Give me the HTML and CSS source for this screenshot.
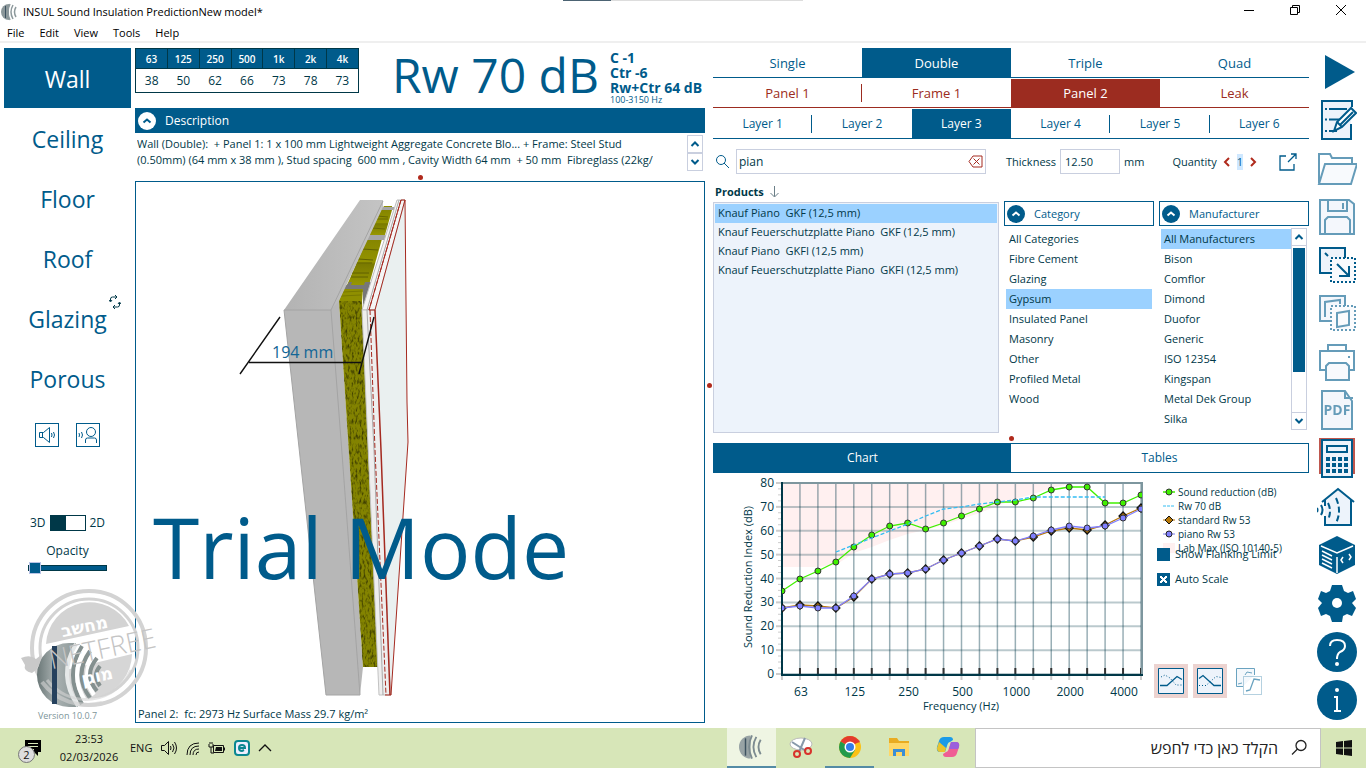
FILE: index.html
```html
<!DOCTYPE html>
<html lang="en">
<head>
<meta charset="utf-8">
<title>INSUL Sound Insulation Prediction</title>
<link rel="stylesheet" href="styles.css">
</head>
<body>
<header class="titlebar">
  <svg class="app-icon" width="18" height="18" viewBox="0 0 18 18"><path d="M8 1a8 8 0 0 0 0 16z" fill="#8b979a"/><path d="M4.500 3v12" stroke="#3d5260" stroke-width="1"/><path d="M9 1q-4 8 0 16M12 2q-4 7 0 14M15 4q-3 5 0 10" fill="none" stroke="#8d999c" stroke-width="1.500"/></svg>
  <h1>INSUL Sound Insulation PredictionNew model*</h1>
  <div class="window-buttons">
    <button aria-label="Minimize"><svg width="12" height="12"><path d="M1 6.500h10" stroke="#000"/></svg></button>
    <button aria-label="Restore"><svg width="12" height="12" fill="none" stroke="#000"><path d="M1.500 3.500h7v7h-7zM3.500 3.500v-2h7v7h-2"/></svg></button>
    <button aria-label="Close"><svg width="12" height="12"><path d="M1 1l10 10M11 1L1 11" stroke="#000"/></svg></button>
  </div>
  <div class="edge-strip"></div>
</header>
<nav class="menubar">
  <button>File</button><button>Edit</button><button>View</button><button>Tools</button><button>Help</button>
</nav>

<main class="workspace">
  <aside class="sidebar">
    <nav class="kinds">
      <button class="active">Wall</button>
      <button>Ceiling</button>
      <button>Floor</button>
      <button>Roof</button>
      <button class="has-mark">Glazing<svg class="mark" width="12" height="14" viewBox="0 0 12 14" fill="none" stroke="#003848"><path d="M1.500 6V4q0-2 2-2H8M6 0l2 2-2 2M10.500 8v2q0 2-2 2H4M6 14l-2-2 2-2M0 5l1.500 2L3 5M9 9l1.500-2L12 9"/></svg></button>
      <button>Porous</button>
    </nav>
    <div class="sound-buttons">
      <button aria-label="Play source"><svg width="22" height="22" viewBox="0 0 22 22" fill="none" stroke="#005b8b"><path d="M3.500 8.500h4l6-5v15l-6-5h-4zM6.500 8.500v5M15.500 9q1 2 0 4M17.500 8q2 3 0 6"/></svg></button>
      <button aria-label="Play receiver"><svg width="22" height="22" viewBox="0 0 22 22" fill="none" stroke="#005b8b"><circle cx="14" cy="8" r="4.500"/><path d="M8.500 19v-3q0-2 2-2h7q2 0 2 2v3M2 9q1 2 0 4M4.500 8q2 3 0 6"/></svg></button>
    </div>
    <div class="view-toggle"><span>3D</span><button role="switch" aria-checked="false" aria-label="3D or 2D view"><i></i></button><span>2D</span></div>
    <label class="opacity">Opacity<input type="range" min="0" max="100" value="0"></label>
    <svg class="brand" width="140" height="124" viewBox="20 586 140 124">
      <defs>
        <linearGradient id="ball" x1="0" x2="1"><stop offset="0" stop-color="#6a7777"/><stop offset=".45" stop-color="#aab2b2"/><stop offset="1" stop-color="#8a9696"/></linearGradient>
      </defs>
      <circle cx="89" cy="648" r="57" fill="none" stroke="#d3d3d3" stroke-width="4"/>
      <circle cx="89" cy="648" r="49" fill="none" stroke="#d3d3d3" stroke-width="3"/>
      <path d="M46 644a44 44 0 0 1 83-18z" fill="#d3d3d3"/>
      <path d="M49 674l83-20a44 44 0 0 1-83 20z" fill="#d6d6d6"/>
      <path d="M76 643h-7a32 32 0 0 0 0 64h9q-22-32-2-64z" fill="url(#ball)"/>
      <g fill="none" stroke-width="4"><path d="M76 644q-19 31 2 62" stroke="#e6e9e9"/><path d="M82 646q-18 29 0 58" stroke="#84908f"/><path d="M86 648q-18 27 0 54" stroke="#fff"/><path d="M90 651q-17 24 0 47" stroke="#84908f"/><path d="M94 654q-14 21 0 41" stroke="#fff"/><path d="M97 658q-14 17 0 33" stroke="#84908f"/><path d="M100 666q-8 9 0 20" stroke="#84908f"/></g>
      <path d="M47 680a49 49 0 0 0 84-10" fill="none" stroke="#d3d3d3" stroke-width="3" opacity=".6"/>
      <path d="M42 682a57 57 0 0 0 60 21" fill="none" stroke="#d3d3d3" stroke-width="4" opacity=".6"/>
      <rect x="52" y="646" width="5" height="58" fill="#26415d"/>
      <g transform="rotate(-12 89 648)">
        <text class="stamp-word" x="89" y="632" text-anchor="middle">מחשב</text>
        <text class="stamp-word" x="91" y="683" text-anchor="middle">מוגן</text>
        <text class="stamp-name" x="48" y="661">NETFREE</text>
      </g>
      <path d="M21 658q9-4 15 1l5-4q0 13-9 18-9-2-7-8z" fill="#c9c9c9"/>
    </svg>
    <p class="version">Version 10.0.7</p>
  </aside>

  <section class="model">
    <div class="summary">
      <table class="bands">
        <thead><tr><th>63</th><th>125</th><th>250</th><th>500</th><th>1k</th><th>2k</th><th>4k</th></tr></thead>
        <tbody><tr><td>38</td><td>50</td><td>62</td><td>66</td><td>73</td><td>78</td><td>73</td></tr></tbody>
      </table>
      <div class="rating">Rw 70 dB</div>
      <div class="terms"><b>C -1</b><b>Ctr -6</b><b>Rw+Ctr 64 dB</b><small>100-3150 Hz</small></div>
    </div>
    <div class="desc-head"><button class="chev light" aria-label="Collapse description"><svg width="18" height="18" viewBox="0 0 18 18"><path d="M5.500 10.500L9 7.500l3.500 3"/></svg></button><h2>Description</h2></div>
    <div class="desc-body">
      <p>Wall (Double):&nbsp; + Panel 1: 1 x 100 mm Lightweight Aggregate Concrete Blo... + Frame: Steel Stud<br>(0.50mm) (64 mm x 38 mm ), Stud spacing&nbsp; 600 mm , Cavity Width 64 mm&nbsp; + 50 mm&nbsp; Fibreglass (22kg/</p>
      <div class="stepper"><button aria-label="Scroll up"><svg width="10" height="8"><path d="M1.500 6L5 2.500 8.500 6"/></svg></button><button aria-label="Scroll down"><svg width="10" height="8"><path d="M1.500 2L5 5.500 8.500 2"/></svg></button></div>
    </div>
    <div class="split-dot"></div>
    <div class="canvas">
      <svg class="scene" viewBox="136 182 568 524" preserveAspectRatio="xMidYMid meet">
        <defs>
          <filter id="wool" x="0" y="0" width="100%" height="100%" color-interpolation-filters="sRGB"><feTurbulence type="fractalNoise" baseFrequency=".5 .2" numOctaves="2" seed="4"/><feColorMatrix values="0 0 0 0 .25  0 0 0 0 .25  0 0 0 0 0  3 0 0 0 -1.400"/><feComposite in2="SourceGraphic" operator="in" result="n"/><feMerge><feMergeNode in="SourceGraphic"/><feMergeNode in="n"/></feMerge></filter>
          <linearGradient id="gtop" x1="0" x2="1"><stop offset="0" stop-color="#b3b3b3"/><stop offset="1" stop-color="#c4c4c4"/></linearGradient>
          <linearGradient id="wtop" x1="0" y1="0" x2="0" y2="1"><stop offset="0" stop-color="#858500"/><stop offset=".5" stop-color="#939300"/><stop offset=".55" stop-color="#7a7a00"/><stop offset="1" stop-color="#979700"/></linearGradient>
        </defs>
        <path d="M384 206h8v3h-10z" fill="#8d8d00"/>
        <path d="M380 210h12l-7 25h-16z" fill="url(#wtop)"/>
        <path d="M376 219h12M377 216l11 1M372 228l13 1" stroke="#686800"/>
        <path d="M367 239h15l-13 46h-22z" fill="url(#wtop)"/>
        <path d="M362 249l16 1M356 263h16M352 273h17M358 259l15 1M351 277h17" stroke="#616100"/>
        <path d="M380 207h14v3h-14zM366 235h22l-3 5h-20z" fill="#a5a5a5"/>
        <path d="M343 285h4l2-3h3l-1 3h13l1-3h6l-8 25v-18h-22z" fill="#777"/>
        <path d="M344 289h19l-1 13h-24z" fill="#8f8f00"/>
        <path d="M343 292l20-1M341 296l20-1" stroke="#797900"/>
        <path d="M360 200h23v7l-44 94v9h-55z" fill="url(#gtop)"/>
        <path d="M284 310h47l8-9 24 366-3 28h-34z" fill="#b7b7b7"/>
        <path d="M284 310h47l10 130 19 255M331 310l52-109M284 310l42 385h34" fill="none" stroke="#a4a4a4"/>
        <path d="M339 301h23l16 366h-15z" fill="#838300" filter="url(#wool)"/>
        <path d="M397 200h8l-30 110h-13z" fill="#f5f5f5" stroke="#bdbdbd"/>
        <path d="M362 310h13l6 140 10 245h-12z" fill="#eee" stroke="#c2c2c2"/>
        <path d="M367 310l7 140 9 245M399 200l-32 110" fill="none" stroke="#aaa"/>
        <path d="M405 200l-30 110 6 140 10 245 17-253-1-40z" fill="#eaf0f0"/>
        <g fill="none" stroke="#a52a20"><path d="M401 200h4l-30 110h-6zM405 200l2 202 1 40-17 253h-6"/><path d="M375 310l6 140 9 245" stroke-width="1.500"/><path d="M370 310l5 140 11 245M401 200l-32 110" stroke-dasharray="5 2"/></g>
        <path d="M280 317l-40 57M374 317l-15 57M249 362.500h112" fill="none" stroke="#111" stroke-width="1.400"/>
        <text class="dim" x="272" y="358">194 mm</text>
        <text class="trial" x="153" y="579">Trial Mode</text>
      </svg>
      <p class="canvas-note">Panel 2:&nbsp; fc: 2973 Hz Surface Mass 29.7 kg/m²</p>
    </div>
  </section>

  <section class="editor">
    <div class="tabs tabs-main"><button>Single</button><button class="active">Double</button><button>Triple</button><button>Quad</button></div>
    <div class="tabs tabs-part"><button class="rule">Panel 1</button><button>Frame 1</button><button class="active">Panel 2</button><button>Leak</button></div>
    <div class="tabs tabs-layer"><button class="rule">Layer 1</button><button>Layer 2</button><button class="active">Layer 3</button><button class="rule">Layer 4</button><button class="rule">Layer 5</button><button>Layer 6</button></div>
    <div class="filters">
      <svg width="17" height="17" viewBox="0 0 17 17" fill="none" stroke="#005b8b"><circle cx="7" cy="7" r="4.500"/><path d="M10 10l5 5"/></svg>
      <div class="search"><input type="text" value="pian" aria-label="Search products"><button aria-label="Clear search"><svg width="15" height="13" viewBox="0 0 15 13" fill="none" stroke="#a52a20"><path d="M5 1h9v11H5L1 6.500zM5.500 3.500l6 6M11.500 3.500l-6 6"/></svg></button></div>
      <label class="thick">Thickness<input type="text" value="12.50"></label><span class="unit">mm</span>
      <span class="qty">Quantity</span>
      <button class="red" aria-label="Less"><svg width="8" height="10"><path d="M6 1L2 5l4 4"/></svg></button><output>1</output><button class="red" aria-label="More"><svg width="8" height="10"><path d="M2 1l4 4-4 4"/></svg></button>
      <button class="open" aria-label="Open in window"><svg width="18" height="18" viewBox="0 0 18 18" fill="none" stroke="#005b8b" stroke-width="1.300"><path d="M7 3H1v14h14v-6M9 9l8-8M12 1h5v5"/></svg></button>
    </div>
    <div class="pickers">
      <div class="products">
        <h3>Products <svg width="11" height="12" viewBox="0 0 11 12"><path d="M5.500 0v10.500M1.500 7l4 4 4-4" fill="none" stroke="#6b7f88"/></svg></h3>
        <ul><li class="sel">Knauf Piano&nbsp; GKF (12,5 mm)</li><li>Knauf Feuerschutzplatte Piano&nbsp; GKF (12,5 mm)</li><li>Knauf Piano&nbsp; GKFI (12,5 mm)</li><li>Knauf Feuerschutzplatte Piano&nbsp; GKFI (12,5 mm)</li></ul>
      </div>
      <div class="facet">
        <div class="facet-head"><button class="chev" aria-label="Collapse category"><svg width="18" height="18" viewBox="0 0 18 18"><path d="M5.500 10.500L9 7.500l3.500 3"/></svg></button><h3>Category</h3></div>
        <ul><li>All Categories</li><li>Fibre Cement</li><li>Glazing</li><li class="sel">Gypsum</li><li>Insulated Panel</li><li>Masonry</li><li>Other</li><li>Profiled Metal</li><li>Wood</li></ul>
      </div>
      <div class="facet">
        <div class="facet-head"><button class="chev" aria-label="Collapse manufacturer"><svg width="18" height="18" viewBox="0 0 18 18"><path d="M5.500 10.500L9 7.500l3.500 3"/></svg></button><h3>Manufacturer</h3></div>
        <div class="scroll">
          <ul><li class="sel">All Manufacturers</li><li>Bison</li><li>Comflor</li><li>Dimond</li><li>Duofor</li><li>Generic</li><li>ISO 12354</li><li>Kingspan</li><li>Metal Dek Group</li><li>Silka</li></ul>
          <div class="bar"><button aria-label="Scroll up"><svg width="10" height="8"><path d="M1.500 6L5 2.500 8.500 6"/></svg></button><i></i><button aria-label="Scroll down"><svg width="10" height="8"><path d="M1.500 2L5 5.500 8.500 2"/></svg></button></div>
        </div>
      </div>
    </div>
    <div class="split-dot"></div>
    <div class="result-tabs"><button class="active">Chart</button><button>Tables</button></div>
    <div class="results">
      <svg class="chart" id="chart" viewBox="713 473 434 249" preserveAspectRatio="xMinYMin meet"></svg>
      <div class="chart-side">
        <ul class="legend">
          <li><svg width="12" height="10"><path d="M0 5h12" stroke="#40f000" stroke-width="1.500"/><circle cx="6" cy="5" r="3" fill="#40f000" stroke="#333"/></svg>Sound reduction (dB)</li>
          <li><svg width="12" height="10"><path d="M0 5h12" stroke="#35bdf2" stroke-dasharray="3 1"/></svg>Rw 70 dB</li>
          <li><svg width="12" height="10"><path d="M0 5h12" stroke="#b87808"/><path d="M6 1l4 4-4 4-4-4z" fill="#b87808" stroke="#111"/></svg>standard Rw 53</li>
          <li><svg width="12" height="10"><path d="M0 5h12" stroke="#7d7df5"/><circle cx="6" cy="5" r="3" fill="#8080ff" stroke="#222"/></svg>piano Rw 53</li>
          <li><svg width="12" height="10"><path d="M0 0h12v10H0z" fill="#fff0f0"/></svg>Lab Max (ISO 10140-5)</li>
        </ul>
        <label class="check"><input type="checkbox">Show Flanking Limit</label>
        <label class="check"><input type="checkbox" checked>Auto Scale</label>
        <div class="curve-buttons">
          <button class="on" aria-label="Curve up"><svg width="26" height="26" viewBox="0 0 26 26" fill="none" stroke="#005b8b"><path d="M.5.5h25v25H.500z" fill="#edf3fb"/><path d="M2 17.500h7l10-9 5 3" stroke-width="1.300"/><path d="M3 9l4-2 5 3 6 7h6" stroke-dasharray="1 2"/></svg></button>
          <button class="on" aria-label="Curve down"><svg width="26" height="26" viewBox="0 0 26 26" fill="none" stroke="#005b8b"><path d="M.5.5h25v25H.500z" fill="#edf3fb"/><path d="M2 10.500l4-3 11 10h7" stroke-width="1.300"/><path d="M2 17.500h7l10-9 5 1" stroke-dasharray="1 2"/></svg></button>
          <button aria-label="Copy curve"><svg width="27" height="27" viewBox="0 0 27 27" fill="none" stroke="#6aa3c0"><path d="M7 18.500H.500V.500h18V7" fill="#f4f8fc"/><path d="M2 16l4-1M9 7l2-3 5 1"/><path d="M7.500 8.500h18v18h-18z" stroke-dasharray="1 1"/><path d="M10 23l4-1 4-11 6 1" stroke-width="1.300"/></svg></button>
        </div>
      </div>
    </div>
  </section>

  <aside class="tools">
    <button aria-label="Run"><svg width="40" height="40" viewBox="0 0 40 40"><path d="M8 3l30 17L8 37z" fill="#005b8b"/></svg></button>
    <button aria-label="Notes"><svg width="40" height="40" viewBox="0 0 40 40" fill="none" stroke="#005b8b" stroke-width="2"><path d="M34 24v15H5V1h30v6" fill="#edf3fb"/><path d="M8 9h2M12 9h18M8 19.500h2M12 19.500h11M8 31h2M12 31h8"/><path d="M17 31l3-9L34 8l5 5-14 14z" fill="#fff"/><path d="M20 22l5 5M23 25l13-13" /></svg></button>
    <button class="dim-tool" aria-label="Open"><svg width="40" height="40" viewBox="0 0 40 40" fill="none" stroke="#005b8b" stroke-width="2"><path d="M2 34V5h11l2 4h20v6"/><path d="M8 15h32l-6 20H2z" fill="#f4f7fc"/></svg></button>
    <button class="dim-tool" aria-label="Save"><svg width="40" height="40" viewBox="0 0 40 40" fill="none" stroke="#005b8b" stroke-width="2"><path d="M3 3h29l5 4v30H3z" fill="#edf3fb"/><path d="M11 3v11h19V3M26 6v6M8 36V23l3-3h19l3 3v13"/></svg></button>
    <button aria-label="Resize"><svg width="40" height="40" viewBox="0 0 40 40" fill="none" stroke="#005b8b" stroke-width="2"><path d="M14 28H3V3h25v10" fill="#edf3fb"/><path d="M14 13h24v24H14z" stroke-dasharray="2 2" fill="#f8fafd"/><path d="M8 8l3 3M20 19l12 12M32 21v10H22"/></svg></button>
    <button class="dim-tool" aria-label="Copy view"><svg width="40" height="40" viewBox="0 0 40 40" fill="none" stroke="#005b8b" stroke-width="2"><path d="M14 28H3V3h25v10" fill="#edf3fb"/><path d="M14 13h24v24H14z" stroke-dasharray="2 2" fill="#f8fafd"/><path d="M8 24V9l15-2v4M20 20l12-2v14l-12 2z"/></svg></button>
    <button class="dim-tool" aria-label="Print"><svg width="40" height="40" viewBox="0 0 40 40" fill="none" stroke="#005b8b" stroke-width="2"><path d="M11 8V3h18v5M9 28H3V9h34v19h-5" /><path d="M9 38V24l3-3h17l3 3v14z" fill="#f4f7fc"/><path d="M31 15h2"/></svg></button>
    <button class="dim-tool" aria-label="PDF"><svg width="40" height="40" viewBox="0 0 40 40" fill="none" stroke="#005b8b" stroke-width="2"><path d="M35 11v28H5V1h23z" fill="#edf3fb"/><path d="M28 1v7h8"/><text class="pdf" x="20" y="25" text-anchor="middle">PDF</text></svg></button>
    <button aria-label="Calculator"><svg width="40" height="40" viewBox="0 0 40 40" fill="none" stroke="#005b8b" stroke-width="2"><path d="M2 0h36v36H2z" fill="#bf574e" stroke="none"/><path d="M5 2h30v37H5z" fill="#edf3fb"/><path d="M10 8h20v6H10z"/><path d="M9 21h22M9 27h22M9 33h22" stroke-width="4" stroke-dasharray="4 2"/></svg></button>
    <button aria-label="Room noise"><svg width="40" height="40" viewBox="0 0 40 40" fill="none" stroke="#005b8b" stroke-width="2"><path d="M8 13v25h27V13L21 2z" fill="#edf3fb" stroke="none"/><path d="M5 15L21 2l16 13M34 13v25H8V29M8 12v7"/><path d="M11 16q4 8 0 17M19 11q6 13 0 25" stroke-dasharray="6 3"/><path d="M4 18q3 5 0 10M0 21q1 2 0 4"/></svg></button>
    <button aria-label="Materials"><svg width="40" height="40" viewBox="0 0 40 40"><path d="M20 1l18 9v20l-18 9-18-9V10z" fill="#005b8b"/><path d="M4 11l16 7 16-7M20 22v16M5 16l10 5M5 20l10 5M5 24l10 5M5 28l10 5M26 22l-2 3 2 3M32 19l2 3-2 3" fill="none" stroke="#fff" stroke-width="1.500"/></svg></button>
    <button aria-label="Settings"><svg width="40" height="40" viewBox="0 0 40 40"><path d="M15 2h10l2 6 4 2 5-2 3 8-4 4 4 5-4 8-5-2-4 2-1 6H15l-2-6-4-2-5 2-3-8 4-5-4-4 3-8 5 2 4-2z" fill="#005b8b"/><circle cx="20" cy="20" r="5" fill="#fff"/></svg></button>
    <button aria-label="Help"><svg width="40" height="40" viewBox="0 0 40 40"><circle cx="20" cy="20" r="20" fill="#005b8b"/><path d="M13 14q0-6 7-6 8 0 8 6 0 4-5 6-3 2-3 7" fill="none" stroke="#fff" stroke-width="2"/><circle cx="20" cy="32" r="2" fill="#fff"/></svg></button>
    <button aria-label="About"><svg width="40" height="40" viewBox="0 0 40 40"><circle cx="20" cy="20" r="20" fill="#005b8b"/><circle cx="20" cy="10" r="2" fill="#fff"/><path d="M17 17h3v14M17 31h7" fill="none" stroke="#fff" stroke-width="2"/></svg></button>
  </aside>
  <div class="side-dot"></div>
</main>

<footer class="taskbar">
  <button class="notices" aria-label="Notifications"><svg width="16" height="16"><path d="M0 0h16v12h-3v4l-4-4H0z"/><path d="M3 3.500h10M3 6.500h10M3 9.500h6" stroke="#d7e6b8"/></svg><span>2</span></button>
  <div class="clock"><time>23:53</time><span>02/03/2026</span></div>
  <span class="lang">ENG</span>
  <svg width="18" height="16" fill="none" stroke="#111"><path d="M1.500 5.500h3l4-4v13l-4-4h-3zM10.500 6q1 2 0 4M12.500 4q3 4 0 8M14.500 2q4 6 0 12"/></svg>
  <svg class="tray" width="14" height="16" fill="none" stroke="#111"><path d="M1 15Q1 3 13 3M4 15Q4 6 13 6M7 15q0-6 6-6M10 15q0-3 3-3"/></svg>
  <svg class="tray" width="18" height="14"><path d="M5.500 4.500h10v7h-10zM16.500 6.500v3" fill="none" stroke="#111"/><path d="M8 6h6v4H7z" fill="#111"/><path d="M1 3v3h4V3M2 1v2M4 1v2M3 6v6h3" fill="none" stroke="#111"/></svg>
  <svg class="tray" width="16" height="16"><rect x="1" y="1" width="14" height="14" rx="3" fill="#eef" stroke="#0b8791" stroke-width="2"/><path d="M5 8h6q0-3-3-3T5 8t3 3l2-1" fill="none" stroke="#0b8791" stroke-width="2"/></svg>
  <svg class="tray" width="14" height="10"><path d="M1 8l6-6 6 6" fill="none" stroke="#111" stroke-width="1.300"/></svg>
  <div class="apps">
    <button class="current" aria-label="INSUL"><svg width="26" height="26" viewBox="0 0 18 18"><path d="M8 1a8 8 0 0 0 0 16z" fill="#98a3a5"/><path d="M4.500 3v12" stroke="#3d5260"/><path d="M9 1q-4 8 0 16M12 2q-4 7 0 14M15 4q-3 5 0 10" fill="none" stroke="#7c8b90" stroke-width="1.300"/></svg></button>
    <button aria-label="Snipping tool"><svg width="26" height="24" fill="none"><ellipse cx="13" cy="9" rx="11" ry="6" fill="#fff" stroke="#bbb"/><path d="M4 7l14 9M17 3l-6 14" stroke="#89a" stroke-width="2"/><circle cx="9" cy="19" r="3" stroke="#d8322c" stroke-width="2"/><circle cx="20" cy="16" r="3" stroke="#d8322c" stroke-width="2"/></svg></button>
    <button class="running" aria-label="Chrome"><svg width="24" height="24"><circle cx="12" cy="12" r="11" fill="#fbc116"/><path d="M12 12L2.500 6.500A11 11 0 0 1 21.500 6.500z" fill="#e33b2e"/><path d="M12 12L2.500 6.500A11 11 0 0 0 12 23l5-8z" fill="#229a4b"/><path d="M12 6.500h9.500" stroke="#e33b2e" stroke-width="2"/><circle cx="12" cy="12" r="5.500" fill="#fff"/><circle cx="12" cy="12" r="4" fill="#337de8"/></svg></button>
    <button aria-label="Explorer"><svg width="22" height="20"><path d="M1 1h8l2 3h10v15H1z" fill="#e9ac22"/><path d="M1 6h20v13H1z" fill="#ffd766"/><path d="M5 19v-7h12v7h-3v-4H8v4z" fill="#3b8fd5"/></svg></button>
    <button aria-label="Copilot"><svg width="24" height="22"><path d="M8 1h6q3 0 3 3l-3 2q-2 0-3 4l-2 6H4q-4 0-3-5l2-6q1-4 5-4z" fill="#1b9be8"/><path d="M3 6L1 12q0 4 3 4h5l1-4z" fill="#e8c52f"/><path d="M16 21h-6q-3 0-3-3l3-2q2 0 3-4l2-6h5q4 0 3 5l-2 6q-1 4-5 4z" fill="#ef5d94"/><path d="M15 6h5q4 0 3 5l-1 2h-9z" fill="#9b60dc"/></svg></button>
  </div>
  <label class="os-search"><input type="text" dir="rtl" placeholder="הקלד כאן כדי לחפש" aria-label="Search"><svg width="18" height="18" fill="none" stroke="#222" stroke-width="1.300"><circle cx="11" cy="6.500" r="5"/><path d="M7.500 10L2 15.500"/></svg></label>
  <button class="start" aria-label="Start"><svg width="16" height="16"><path d="M0 2l7-1v6.500H0zM8 1l8-1v7.500H8zM0 8.500h7V15l-7-1zM8 8.500h8V16l-8-1z" fill="#111"/></svg></button>
</footer>
<script src="chart.js"></script>
</body>
</html>
```
FILE: styles.css
```css
:root { --blue: #005b8b; --red: #9c2c20; --ink: #003848; --sel: #9bd1ff; --line: #c9cfdf; }
* { box-sizing: border-box; }
body { margin: 0; min-height: 100vh; display: flex; flex-direction: column; background: #fff; color: var(--ink); font: 12px/16px "Open Sans", "Noto Sans", sans-serif; }
button { font: inherit; color: inherit; background: none; border: 0; padding: 0; margin: 0; }
input { font: inherit; color: inherit; }
h1, h2, h3, p, ul { margin: 0; padding: 0; font-size: inherit; font-weight: 400; }
ul { list-style: none; }
svg { display: block; flex: none; }
.titlebar { position: relative; display: flex; align-items: center; gap: 4px; height: 24px; padding-left: 1px; color: #000; }
.titlebar h1 { font-size: 11px; }
.edge-strip { position: absolute; top: 0; left: 563px; width: 240px; height: 1px; background: #ddd; border-left: 48px solid #4c6373; }
.window-buttons { margin-left: auto; padding-right: 2px; display: flex; align-self: flex-start; }
.window-buttons button { width: 46px; height: 20px; display: grid; place-items: center; }
.menubar { display: flex; gap: 15px; height: 19px; padding: 0 7px; border-bottom: 2px solid #efefef; color: #000; font-size: 11px; }
.workspace { position: relative; flex: 1; display: grid; grid-template-columns: 127px minmax(0, 566fr) minmax(0, 596fr) 40px; column-gap: 8px; padding: 5px 9px 5px 4px; }
.sidebar { position: relative; display: flex; flex-direction: column; align-items: center; }
.model { margin-left: -4px; }
.kinds { width: 100%; }
.kinds button { position: relative; display: block; width: 100%; height: 60px; padding-top: 2px; font-size: 23px; color: var(--blue); }
.kinds .active { background: var(--blue); color: #fff; }
.mark { position: absolute; top: 7px; right: 10px; }
.sound-buttons { display: flex; gap: 17px; margin-top: 15px; }
.sound-buttons button { border: 1px solid var(--blue); width: 24px; height: 24px; }
.view-toggle { display: flex; align-items: center; gap: 4px; margin-top: 68px; }
.view-toggle button { width: 36px; height: 16px; border: 1px solid var(--ink); display: flex; }
.view-toggle i { width: 15px; background: var(--ink); }
.opacity { display: flex; flex-direction: column; align-items: center; margin-top: 12px; }
.opacity input { appearance: none; width: 79px; height: 6px; margin: 6px 0 0; border: 1px solid var(--ink); background: var(--blue); }
.opacity input::-webkit-slider-thumb { appearance: none; width: 12px; height: 12px; background: var(--blue); border: 1px solid #b9c4e6; }
.brand { position: absolute; z-index: 2; left: 16px; bottom: 13px; }
.stamp-word { font: 700 17px "DejaVu Sans", sans-serif; fill: #fff; }
.stamp-name { font: 300 27px "Open Sans", sans-serif; fill: #c4c4c4; }
.version { margin-top: auto; font-size: 9px; line-height: 14px; color: #7d9599; }
.model, .editor { display: flex; flex-direction: column; min-width: 0; }
.summary { display: flex; height: 60px; }
.bands { flex: none; width: 224px; height: 45px; border-collapse: collapse; table-layout: fixed; text-align: center; }
.bands th { background: var(--blue); color: #fff; font-size: 10px; font-weight: 600; border: 1px solid var(--ink); height: 20px; padding: 0; }
.bands td { padding: 0; border-bottom: 1px solid var(--ink); }
.bands tbody { border: 1px solid var(--ink); }
.rating { margin-left: auto; font-size: 48px; line-height: 54px; color: var(--blue); white-space: nowrap; }
.terms { width: 95px; margin-left: 11px; padding-top: 2px; display: flex; flex-direction: column; color: var(--blue); font-size: 14px; line-height: 15px; white-space: nowrap; }
.terms small { font-size: 9px; line-height: 9px; }
.desc-head { display: flex; align-items: center; gap: 9px; height: 25px; padding-left: 3px; background: var(--blue); color: #fff; }
.chev { width: 18px; height: 18px; border-radius: 50%; background: var(--blue); flex: none; }
.chev path { fill: none; stroke: #fff; stroke-width: 2; }
.chev.light { background: #fff; }
.chev.light path { stroke: var(--blue); }
.desc-body { display: flex; justify-content: space-between; padding: 2px 2px 0; white-space: nowrap; }
.desc-body p { overflow: hidden; padding-top: 1px; font-size: 11px; }
.stepper button { display: grid; place-items: center; width: 16px; height: 18px; border: 1px solid var(--line); }
.stepper path, .bar path { fill: none; stroke: var(--blue); stroke-width: 2; }
.split-dot { width: 5px; height: 5px; border-radius: 50%; background: #b02a1c; margin: 4px auto 1px; }
.canvas { flex: 1; display: flex; flex-direction: column; border: 1px solid var(--blue); }
.scene { width: 100%; flex: 1 1 auto; height: 0; min-height: 0; }
.dim { font: 16px "Open Sans", sans-serif; fill: #126696; }
.trial { font: 84px "Open Sans", sans-serif; fill: var(--blue); }
.canvas-note { padding-left: 2px; font-size: 11px; }
.tabs { display: flex; border-bottom: 1px solid var(--blue); color: var(--blue); }
.tabs button { flex: 1; position: relative; height: 29px; }
.tabs .active { background: var(--blue); color: #fff; }
.tabs .rule { background: linear-gradient(currentColor, currentColor) right center / 1px 18px no-repeat; }
.tabs-main { font-size: 13px; }
.tabs-part { margin-top: 1px; color: var(--red); border-color: var(--red); font-size: 13px; }
.tabs-part .active { background: var(--red); }
.tabs-part button { height: 28px; }
.tabs-layer { margin-top: 1px; }
.filters { display: flex; align-items: center; padding: 9px 8px 0 1px; height: 36px; font-size: 11px; }
.search { flex: 1; max-width: 250px; height: 25px; display: flex; align-items: center; margin-left: 5px; border: 1px solid var(--line); padding-right: 2px; }
.search input { flex: 1; min-width: 0; border: 0; padding: 0 2px; font-size: 12px; outline: 0; background: none; }
.thick { display: flex; align-items: center; gap: 4px; margin-left: 20px; }
.thick input { width: 60px; height: 25px; border: 1px solid var(--line); padding: 0 4px; }
.unit { margin-left: 4px; }
.qty { margin-left: auto; padding-right: 6px; }
.red path { fill: none; stroke: #b02a1c; stroke-width: 2; }
.filters output { margin: 0 6px; background: #cfe8ff; color: var(--blue); }
.open { margin: 0 4px 0 22px; }
.pickers { display: grid; grid-template-columns: minmax(0, 286fr) minmax(0, 150fr) minmax(0, 150fr); column-gap: 5px; padding-top: 7px; height: 258px; }
.products { display: flex; flex-direction: column; }
.products h3 { display: flex; align-items: center; gap: 5px; height: 20px; padding-left: 2px; font-weight: 700; font-size: 11px; }
.products ul { flex: 1; border: 1px solid var(--line); background: #edf3fb; padding: 1px; font-size: 11px; }
.products li { height: 19px; padding: 1px 3px; white-space: nowrap; }
.sel { background: var(--sel); }
.facet { display: flex; flex-direction: column; padding-top: 19px; font-size: 11px; }
.facet-head { display: flex; align-items: center; gap: 9px; height: 25px; padding-left: 2px; border: 1px solid var(--blue); color: var(--blue); }
.facet ul { flex: 1; margin: 3px 2px 0; }
.facet li { height: 20px; padding: 2px 3px; white-space: nowrap; }
.scroll { display: flex; }
.scroll ul { margin-right: 0; }
.bar { width: 16px; height: 202px; margin: 2px 2px 0 0; border: 1px solid var(--line); display: flex; flex-direction: column; }
.bar button { height: 17px; display: grid; place-items: center; border-bottom: 1px solid var(--line); }
.bar button:last-child { margin-top: auto; border-bottom: 0; border-top: 1px solid var(--line); }
.bar i { height: 124px; margin: 2px 1px; background: var(--blue); }
.editor > .split-dot { margin: 3px auto 2px; }
.result-tabs { display: flex; border: 1px solid var(--blue); color: var(--blue); height: 30px; font-size: 12px; }
.result-tabs button { flex: 1; }
.result-tabs .active { background: var(--blue); color: #fff; }
.results { flex: 1; display: flex; }
.chart { flex: 1; min-width: 0; width: 0; overflow: visible; }
.chart text { font: 12px "Open Sans", sans-serif; fill: var(--ink); }
.chart .axis-title { font-size: 11px; }
.chart-side { flex: none; width: 162px; padding: 12px 0 0 10px; white-space: nowrap; }
.legend { height: 63px; padding-left: 6px; }
.legend li { display: flex; align-items: center; gap: 3px; height: 14px; font-size: 10px; }
.check { display: flex; align-items: center; gap: 5px; height: 12px; margin-bottom: 13px; font-size: 11px; }
.check input { appearance: none; width: 13px; height: 13px; margin: 0; background: var(--blue); }
.check input:checked { background: linear-gradient(45deg, transparent 40%, #fff 40% 60%, transparent 60%) center / 7px 7px no-repeat, linear-gradient(-45deg, transparent 40%, #fff 40% 60%, transparent 60%) center / 7px 7px no-repeat, var(--blue); }
.curve-buttons { display: flex; gap: 5px; margin-top: 79px; margin-left: -3px; }
.curve-buttons button { width: 34px; height: 34px; display: grid; place-items: center; }
.curve-buttons .on { background: #ecd3d0; }
.tools { display: flex; flex-direction: column; justify-content: space-between; padding: 4px 0 3px; }
.tools button { height: 40px; }
.dim-tool { opacity: .6; }
.pdf { font: 700 14px "Open Sans", sans-serif; fill: var(--blue); stroke: none; }
.side-dot { position: absolute; left: 707px; top: 340px; width: 5px; height: 5px; border-radius: 50%; background: #b02a1c; }
.taskbar { flex: none; display: flex; align-items: center; height: 40px; background: #d7e6b8; color: #111; }
.notices { position: relative; width: 24px; margin-left: 25px; height: 24px; }
.notices span { position: absolute; left: -7px; top: 10px; width: 17px; height: 17px; border: 1px solid #777; border-radius: 50%; background: #ddd; font-size: 11px; line-height: 15px; }
.clock { display: flex; flex-direction: column; align-items: center; width: 80px; font-size: 11px; line-height: 18px; }
.lang { margin: 0 8px 0 1px; font-size: 11px; }
.taskbar .tray { margin-left: 8px; }
.apps { display: flex; margin-left: auto; margin-right: 3px; height: 40px; }
.apps button { width: 49px; display: grid; place-items: center; border-bottom: 2px solid transparent; }
.apps .current { background: #eff5e3; border-color: #548ba5; }
.apps .running { border-color: #548ba5; }
.os-search { flex: 0 1 346px; height: 40px; display: flex; align-items: center; gap: 10px; padding-right: 12px; background: #fff; border: 1px solid #c4c4c4; }
.os-search input { flex: 1; min-width: 0; border: 0; outline: 0; font-size: 16px; }
.os-search input::placeholder { color: #222; opacity: 1; }
.start { width: 45px; height: 40px; display: grid; place-items: center; }
```
FILE: chart.js
```js
const svg = document.getElementById('chart');
const step = 17.95, left = 782, top0 = 483, bottom = 674;
const green = [591,579,571,562,547,535,526,523,529,523,516,509,502,502,498,490,487,487,503,503,495];
const standard = [608,605,606,608,597,579,574,573,569,560,553,546,539,541,537,531,528,530,525,516,508];
const piano = [608,606,608,608,596,579,574,573,569,560,553,546,539,541,536,530,526,528,526,518,509];
const target = [552,545,538,531,524,516,509,507,504,502,500,497,497,497,497,497];
const labMax = [567,567,567,565,553,547,540,534,530,525,519,513,506,499,494,488,484];
const x = i => left + i * step;
const path = (ys, from = 0) => ys.map((y, i) => (i ? 'L' : 'M') + x(i + from) + ' ' + y).join('');
let out = '<defs><clipPath id="plot"><path d="M782 480h360v196h-360z"/></clipPath></defs>';
out += `<path d="${path(labMax)}L${x(17)} 483H782Z" fill="#fff0f0"/>`;
for (let i = 0; i <= 20; i++) {
  out += `<path d="M${x(i)} 483V674" stroke="#003848" stroke-opacity=".4" stroke-width="1.500"/>`;
  out += `<path d="M${x(i)} 668v6" stroke="#333" stroke-width="2"/><path d="M${x(i)} 675v5" stroke="#ccc" stroke-width="2"/>`;
}
for (let v = 0; v <= 80; v += 10) {
  const y = bottom - v * (bottom - top0) / 80;
  out += `<path d="M782 ${y}H1141" stroke="#003848" stroke-opacity=".27" stroke-width="2"/><path d="M776 ${y}h5" stroke="#ccc" stroke-width="2"/>`;
  out += `<text x="774" y="${y + 4}" text-anchor="end">${v}</text>`;
  if (v < 80) for (let k = 1; k < 4; k++) out += `<path d="M778 ${y - k * 6}h3" stroke="#ccc"/>`;
}
out += '<path d="M782 483H1142V674" fill="none" stroke="#7d969e" stroke-width="2"/><path d="M782 482V675H1143" fill="none" stroke="#003848" stroke-width="2"/>';
const mark = {
  dot: (px, py, c) => `<circle cx="${px}" cy="${py}" r="3" fill="${c}" stroke="#333"/>`,
  diamond: (px, py, c) => `<path d="M${px} ${py - 4}l4 4-4 4-4-4z" fill="${c}" stroke="#111" stroke-width="1.300"/>`
};
const series = (ys, c, kind) => `<path d="${path(ys)}" fill="none" stroke="${c}" stroke-width="1.300"/>` + ys.map((y, i) => mark[kind](x(i), y, c)).join('');
out += '<g clip-path="url(#plot)">' + series(green, '#40f000', 'dot') + `<path d="${path(target, 3)}" fill="none" stroke="#35bdf2" stroke-width="1.300" stroke-dasharray="4 2"/>` + series(standard, '#b87808', 'diamond') + series(piano, '#8080ff', 'dot') + '</g>';
[['63', 1], ['125', 4], ['250', 7], ['500', 10], ['1000', 13], ['2000', 16], ['4000', 19]].forEach(([t, i]) => {
  out += `<text x="${x(i) + 1}" y="696" text-anchor="middle">${t}</text>`;
});
out += '<text class="axis-title" x="961" y="710" text-anchor="middle">Frequency (Hz)</text><text class="axis-title" transform="translate(752 577) rotate(-90)" text-anchor="middle">Sound Reduction Index (dB)</text>';
svg.innerHTML = out;
```
